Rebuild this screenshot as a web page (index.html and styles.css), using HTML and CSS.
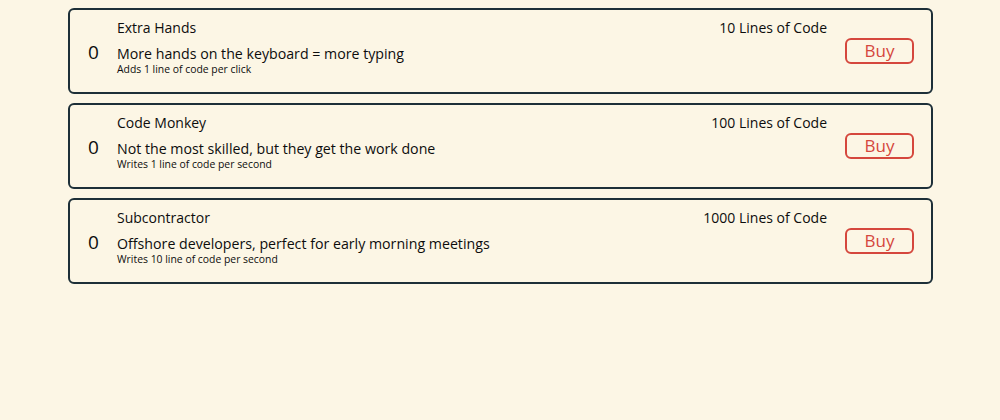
FILE: index.html
```html
<!DOCTYPE html>
<html lang="en">
<head>
  <meta charset="UTF-8" />
  <title>Store</title>
  <link rel="stylesheet" href="styles.css">
</head>
<body>
  <div class="store">
    <div class="item">
      <div class="count">0</div>
      <div class="info">
        <div class="head">
          <span class="name">Extra Hands</span>
          <span class="cost">10 Lines of Code</span>
        </div>
        <p class="desc">More hands on the keyboard = more typing</p>
        <p class="effect">Adds 1 line of code per click</p>
      </div>
      <button class="buy">Buy</button>
    </div>

    <div class="item">
      <div class="count">0</div>
      <div class="info">
        <div class="head">
          <span class="name">Code Monkey</span>
          <span class="cost">100 Lines of Code</span>
        </div>
        <p class="desc">Not the most skilled, but they get the work done</p>
        <p class="effect">Writes 1 line of code per second</p>
      </div>
      <button class="buy">Buy</button>
    </div>

    <div class="item">
      <div class="count">0</div>
      <div class="info">
        <div class="head">
          <span class="name">Subcontractor</span>
          <span class="cost">1000 Lines of Code</span>
        </div>
        <p class="desc">Offshore developers, perfect for early morning meetings</p>
        <p class="effect">Writes 10 line of code per second</p>
      </div>
      <button class="buy">Buy</button>
    </div>
  </div>
</body>
</html>
```

FILE: styles.css
```css
body {
  font-family: "Open Sans", "Noto Sans", sans-serif;
  background: #fcf6e5;
  margin: 0;
  color: #0d0d0d;
}
.store {
  width: 865px;
  margin: 8px 0 0 68px;
  display: flex;
  flex-direction: column;
  gap: 9px;
}
.item {
  display: flex;
  align-items: center;
  border: 2px solid #1d2f38;
  border-radius: 6px;
  height: 86px;
  box-sizing: border-box;
  padding: 0 17px 0 18px;
}
.count {
  width: 29px;
  font-size: 19px;
  line-height: 24px;
  padding-top: 2px;
}
.info {
  flex: 1;
  padding-bottom: 9px;
}
.head {
  display: flex;
  justify-content: space-between;
  font-size: 14px;
  line-height: 20px;
}
.desc {
  margin: 7px 0 0;
  font-size: 14.2px;
  line-height: 18px;
}
.effect {
  margin: 0;
  font-size: 10.4px;
  line-height: 12px;
}
.buy {
  margin-left: 18px;
  width: 69px;
  height: 26px;
  padding: 0 0 1px;
  background: transparent;
  border: 2px solid #d5473d;
  border-radius: 6px;
  color: #d5473d;
  font-family: inherit;
  font-size: 17px;
  line-height: 20px;
  cursor: pointer;
}
```
